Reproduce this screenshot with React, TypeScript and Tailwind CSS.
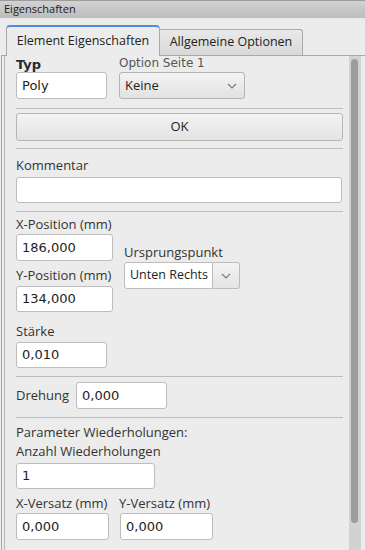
import React from "react";

// Properties dock: "Eigenschaften" panel with tabs and a scrolling form

const SANS = "font-['Open_Sans',_'DejaVu_Sans',_sans-serif]";
const VALUE = "font-['DejaVu_Sans',_sans-serif]";

function Chevron() {
  return (
    <svg width="10" height="6" viewBox="0 0 10 6" className="shrink-0">
      <polyline points="1,1 5,5 9,1" fill="none" stroke="#7a7a7a" strokeWidth="1.2" />
    </svg>
  );
}

function Field({ value, w, h = 26 }: { value: string; w: string; h?: number }) {
  return (
    <div
      className={`${w} ${h === 27 ? "h-[27px]" : "h-[26px]"} flex items-center bg-white border border-[#bdbdbd] rounded-[3px] px-[5px] text-[13px] text-[#1e1e1e] ${VALUE}`}
    >
      {value}
    </div>
  );
}

function Label({ children, className = "" }: { children: React.ReactNode; className?: string }) {
  return (
    <div className={`h-[15px] leading-[15px] text-[13px] text-[#333] whitespace-nowrap ${className}`}>
      {children}
    </div>
  );
}

function Sep({ className = "" }: { className?: string }) {
  return <div className={`h-px bg-[#bdbdbd] ${className}`} />;
}

export default function App() {
  return (
    <div className={`w-[365px] h-[550px] bg-[#ececec] overflow-hidden flex flex-col ${SANS}`}>
      {/* title bar */}
      <div className="h-[18px] shrink-0 border-t border-[#9c9c9c] bg-linear-to-b from-[#d2d2d2] to-[#bcbcbc] pl-[4px] text-[11px] leading-[16px] text-[#1a1a1a]">
        Eigenschaften
      </div>

      {/* tabs */}
      <div className="flex items-end h-[37px] shrink-0 pl-[6px]">
        <div className="relative z-10 -mb-px h-[31px] w-[154px] bg-[#ececec] border-t-2 border-x border-t-[#4a90d9] border-x-[#a9a9a9] rounded-t-[4px] flex items-center justify-center text-[12.5px] text-[#222]">
          Element Eigenschaften
        </div>
        <div className="h-[26px] w-[143px] bg-linear-to-b from-[#e9e9e9] to-[#d9d9d9] border-t border-r border-[#a9a9a9] rounded-tr-[3px] flex items-center justify-center text-[12.5px] text-[#222]">
          Allgemeine Optionen
        </div>
      </div>

      {/* pane */}
      <div className="flex-1 ml-px border-l border-t border-[#a9a9a9] flex">
        <div className="ml-[2px] border-l border-[#b8b8b8] pl-[6px] flex flex-1">
          <div className="flex-1 px-[5px] pt-px">
            {/* Typ / Option */}
            <div className="flex">
              <div className="w-[91px]">
                <div className={`h-[15px] leading-[15px] text-[13px] font-bold text-[#2a2a2a] ${VALUE}`}>Typ</div>
                <Field value="Poly" w="w-[91px]" h={27} />
              </div>
              <div className="ml-[12px]">
                <div className={`h-[15px] leading-[13px] text-[12px] text-[#555] ${VALUE}`}>Option Seite 1</div>
                <div className="w-[126px] h-[27px] flex items-center justify-between border border-[#b3b3b3] rounded-[3px] bg-linear-to-b from-[#f3f3f3] to-[#e2e2e2] pl-[5px] pr-[7px] text-[13px] text-[#1e1e1e]">
                  <span>Keine</span>
                  <Chevron />
                </div>
              </div>
            </div>

            <Sep className="mt-[9px]" />
            <div className="mt-[4px] h-[28px] border border-[#b6b6b6] rounded-[3px] bg-linear-to-b from-[#f4f4f4] to-[#e3e3e3] flex items-center justify-center text-[13px] text-[#222]">
              OK
            </div>
            <Sep className="mt-[7px]" />

            <Label className="mt-[9px]">Kommentar</Label>
            <div className="mt-[4px]">
              <Field value="" w="w-[326px]" />
            </div>
            <Sep className="mt-[8px]" />

            {/* position */}
            <div className="mt-[5px] flex">
              <div className="w-[97px]">
                <Label>X-Position (mm)</Label>
                <div className="mt-[2px]">
                  <Field value="186,000" w="w-[97px]" h={27} />
                </div>
                <Label className="mt-[7px]">Y-Position (mm)</Label>
                <div className="mt-[3px]">
                  <Field value="134,000" w="w-[97px]" />
                </div>
              </div>
              <div className="ml-[11px] mt-[28px]">
                <Label>Ursprungspunkt</Label>
                <div className="mt-[2px] flex h-[27px]">
                  <div className="w-[89px] bg-white border border-[#bdbdbd] rounded-l-[3px] flex items-center pl-[5px] text-[12.5px] text-[#1e1e1e] whitespace-nowrap overflow-hidden">
                    Unten Rechts
                  </div>
                  <div className="w-[27px] border border-l-0 border-[#bdbdbd] rounded-r-[3px] bg-linear-to-b from-[#f3f3f3] to-[#e4e4e4] flex items-center justify-center">
                    <Chevron />
                  </div>
                </div>
              </div>
            </div>

            <Label className="mt-[12px]">Stärke</Label>
            <div className="mt-[3px]">
              <Field value="0,010" w="w-[91px]" />
            </div>
            <Sep className="mt-[8px]" />

            <div className="mt-[5px] flex items-center">
              <Label className="w-[60px] leading-[27px] h-[27px]">Drehung</Label>
              <Field value="0,000" w="w-[91px]" h={27} />
            </div>
            <Sep className="mt-[8px]" />

            <Label className="mt-[7px]">Parameter Wiederholungen:</Label>
            <Label className="mt-[4px]">Anzahl Wiederholungen</Label>
            <div className="mt-[4px]">
              <Field value="1" w="w-[139px]" />
            </div>

            <div className="mt-[7px] flex">
              <div className="w-[103px]">
                <Label>X-Versatz (mm)</Label>
                <div className="mt-[2px]">
                  <Field value="0,000" w="w-[93px]" h={27} />
                </div>
              </div>
              <div>
                <Label>Y-Versatz (mm)</Label>
                <div className="mt-[2px] ml-px">
                  <Field value="0,000" w="w-[93px]" h={27} />
                </div>
              </div>
            </div>
          </div>
        </div>

        {/* scrollbar */}
        <div className="ml-px w-[12px] bg-[#d2d2d2] pt-[3px] px-[2px]">
          <div className="w-[7px] h-[464px] rounded-full bg-[#9c9c9c]" />
        </div>
        <div className="w-[4px]" />
      </div>
    </div>
  );
}
